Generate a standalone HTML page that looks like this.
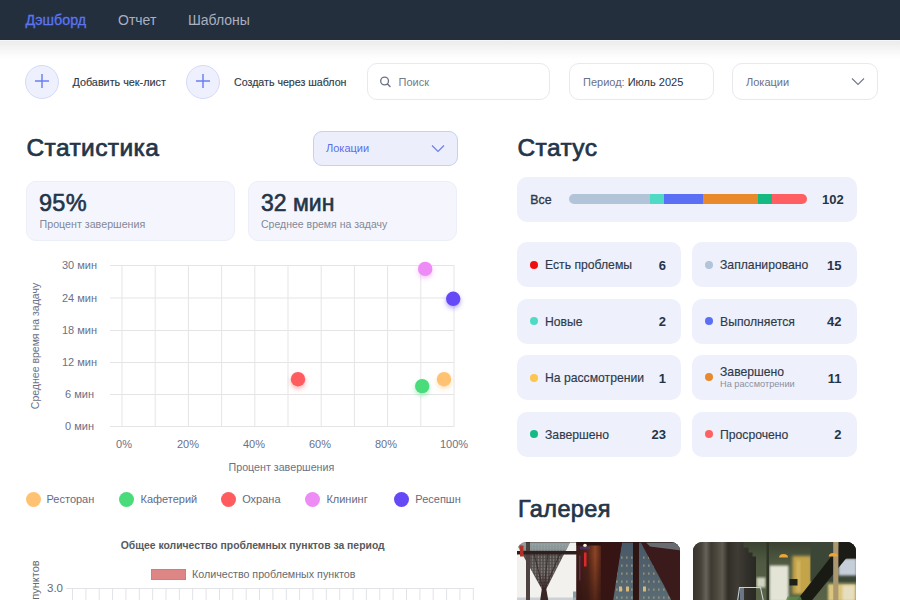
<!DOCTYPE html>
<html><head><meta charset="utf-8">
<style>
*{box-sizing:border-box;margin:0;padding:0}
html,body{width:900px;height:600px;overflow:hidden;background:#fff}
body{position:relative;font-family:"Liberation Sans",sans-serif;color:#2a3646}
.a{position:absolute;white-space:nowrap}
#hdr{left:0;top:0;width:900px;height:39.8px;background:#242f3d}
#shadow{left:0;top:40px;width:900px;height:20px;background:linear-gradient(#fafafa,#ececec 8%,#f4f4f4 40%,#fdfdfd 85%,#fff)}
.nav{top:12px;font-size:14px;line-height:16px;color:#a9afc1}
.circ{width:34px;height:34px;border-radius:50%;background:#eef0fd;border:1px solid #d5dbf8}
.plus{position:absolute;left:9.5px;top:9.5px;width:14px;height:14px}
.plus:before,.plus:after{content:"";position:absolute;background:#6a7ff2}
.plus:before{left:6.3px;top:0;width:1.35px;height:14px}
.plus:after{top:6.3px;left:0;height:1.35px;width:14px}
.btxt{font-size:10.8px;line-height:13px;color:#2f3a48;-webkit-text-stroke:0.15px #2f3a48}
.box{border:1px solid #e8e9ed;border-radius:10px;background:#fff}
.h2{font-size:24.5px;font-weight:400;color:#233549;line-height:28px;-webkit-text-stroke:0.7px #233549;letter-spacing:0.4px}
.card{background:#f5f6fd;border:1px solid #eceef8;border-radius:10px}
.scard{background:#eef0fc;border-radius:10px}
.dot{position:absolute;width:8px;height:8px;border-radius:50%;top:18.5px;left:13.4px}
.sl{position:absolute;left:28px;top:16px;font-size:12.2px;line-height:15px;color:#2d3a4a;-webkit-text-stroke:0.15px #2d3a4a}
.sn{position:absolute;right:15px;top:15.5px;font-size:13px;line-height:15px;font-weight:700;color:#233549}
.yl{font-size:11px;line-height:13px;color:#6b7187;text-align:center;width:60px}
.xl{font-size:11px;line-height:13px;color:#6b7187;width:60px;text-align:center}
.lg{font-size:11px;line-height:13px;color:#656b7f}
.ld{width:15px;height:15px;border-radius:50%}
</style></head><body>
<div class="a" id="hdr"></div>
<div class="a" id="shadow"></div>
<div class="a nav" style="left:25.6px;top:11.5px;color:#5b74f2;font-size:14.3px;-webkit-text-stroke:0.3px #5b74f2">Дэшборд</div>
<div class="a nav" style="left:118px">Отчет</div>
<div class="a nav" style="left:188px">Шаблоны</div>

<!-- toolbar -->
<div class="a circ" style="left:25px;top:64.5px"></div><svg class="a" style="left:33.75px;top:73px" width="16" height="16" viewBox="0 0 16 16"><path d="M1 8H15M8 1V15" stroke="#6a7ff2" stroke-width="1.45"/></svg>
<div class="a btxt" style="left:72.5px;top:75.8px">Добавить чек-лист</div>
<div class="a circ" style="left:186px;top:64.5px"></div><svg class="a" style="left:194.75px;top:73px" width="16" height="16" viewBox="0 0 16 16"><path d="M1 8H15M8 1V15" stroke="#6a7ff2" stroke-width="1.45"/></svg>
<div class="a btxt" style="left:234px;top:75.8px;font-size:10.65px">Создать через шаблон</div>

<div class="a box" style="left:367px;top:63px;width:183px;height:37px"></div>
<svg class="a" style="left:379px;top:75px" width="13" height="13" viewBox="0 0 13 13"><circle cx="5.6" cy="6" r="3.9" fill="none" stroke="#6b7187" stroke-width="1.35"/><path d="M8.5 9L11 11.5" stroke="#6b7187" stroke-width="1.4" stroke-linecap="round"/></svg>
<div class="a" style="left:398.5px;top:75.7px;font-size:11px;line-height:13px;color:#737a8c">Поиск</div>

<div class="a box" style="left:569px;top:63px;width:145px;height:37px"></div>
<div class="a" style="left:583px;top:75.7px;font-size:11px;line-height:13px;color:#6b7187">Период: <span style="color:#2a3646;-webkit-text-stroke:0.05px #2a3646">Июль 2025</span></div>

<div class="a box" style="left:732px;top:63px;width:146px;height:37px"></div>
<div class="a" style="left:746px;top:75.7px;font-size:11px;line-height:13px;color:#6b7187">Локации</div>
<svg class="a" style="left:851px;top:77px" width="14" height="9" viewBox="0 0 14 9"><path d="M1 1.5L7 7.5L13 1.5" fill="none" stroke="#72778c" stroke-width="1.1"/></svg>

<!-- Статистика -->
<div class="a h2" style="left:26.5px;top:134px">Статистика</div>
<div class="a" style="left:313px;top:131px;width:145px;height:35px;background:#eceefc;border:1px solid #c8cff6;border-radius:9px"></div>
<div class="a" style="left:326px;top:142px;font-size:11px;line-height:13px;color:#5b6ee8">Локации</div>
<svg class="a" style="left:431px;top:144px" width="14" height="9" viewBox="0 0 14 9"><path d="M1 1.5L7 7.5L13 1.5" fill="none" stroke="#6a7de8" stroke-width="1.15"/></svg>

<div class="a card" style="left:26px;top:181px;width:209px;height:60px"></div>
<div class="a" style="left:39px;top:189.5px;font-size:23.5px;line-height:26px;color:#233549;-webkit-text-stroke:0.6px #233549;letter-spacing:0.3px">95%</div>
<div class="a" style="left:39.5px;top:218px;font-size:10.7px;line-height:13px;color:#828898">Процент завершения</div>
<div class="a card" style="left:248px;top:181px;width:209px;height:60px"></div>
<div class="a" style="left:261px;top:189.5px;font-size:23px;line-height:26px;color:#233549;-webkit-text-stroke:0.6px #233549">32 мин</div>
<div class="a" style="left:261px;top:218px;font-size:10.5px;line-height:13px;color:#828898">Среднее время на задачу</div>

<!-- scatter chart -->
<svg class="a" style="left:0;top:250px" width="480" height="190" viewBox="0 250 480 190">
<g stroke="#e5e5e7" stroke-width="1">
<path d="M110 265.5H454M110 298H454M110 330.5H454M110 362.5H454M110 394.5H454M110 426.5H454"/>
<path d="M122 265V427M155.2 265V427M188.4 265V427M221.6 265V427M254.8 265V427M288 265V427M321.2 265V427M354.4 265V427M387.6 265V427M420.8 265V427M454 265V427"/>
</g>
</svg>
<div class="a yl" style="left:49.5px;top:259px">30 мин</div>
<div class="a yl" style="left:49.5px;top:291.5px">24 мин</div>
<div class="a yl" style="left:49.5px;top:324px">18 мин</div>
<div class="a yl" style="left:49.5px;top:356px">12 мин</div>
<div class="a yl" style="left:49.5px;top:388px">6 мин</div>
<div class="a yl" style="left:49.5px;top:420px">0 мин</div>
<div class="a" style="left:34.6px;top:346.3px;transform:translate(-50%,-50%) rotate(-90deg);font-size:10.5px;line-height:13px;color:#6b7187">Среднее время на задачу</div>
<div class="a xl" style="left:94px;top:438px">0%</div>
<div class="a xl" style="left:158px;top:438px">20%</div>
<div class="a xl" style="left:224px;top:438px">40%</div>
<div class="a xl" style="left:290px;top:438px">60%</div>
<div class="a xl" style="left:356px;top:438px">80%</div>
<div class="a xl" style="left:424px;top:438px">100%</div>
<div class="a" style="left:228.5px;top:461px;font-size:10.7px;line-height:13px;color:#6b7187">Процент завершения</div>

<svg class="a" style="left:280px;top:250px" width="190" height="160" viewBox="280 250 190 160">
<defs><filter id="gl" x="-100%" y="-100%" width="300%" height="300%"><feGaussianBlur stdDeviation="2.5"/></filter></defs>
<g filter="url(#gl)" opacity="0.5"><circle cx="425.2" cy="271.4" r="7" fill="#ee8cf6"/><circle cx="453.2" cy="301.3" r="7" fill="#6549f7"/><circle cx="298" cy="381.7" r="7" fill="#ff5c5f"/><circle cx="422.2" cy="388.6" r="7" fill="#4adb7b"/><circle cx="444" cy="381.7" r="7" fill="#ffc273"/></g>
<circle cx="425.2" cy="268.9" r="7.2" fill="#ee8cf6"/><circle cx="453.2" cy="298.8" r="7.2" fill="#6549f7"/><circle cx="298" cy="379.2" r="7.2" fill="#ff5c5f"/><circle cx="422.2" cy="386.1" r="7.2" fill="#4adb7b"/><circle cx="444" cy="379.2" r="7.2" fill="#ffc273"/>
</svg>

<!-- legend -->
<div class="a ld" style="left:25.7px;top:491.7px;background:#ffc273"></div>
<div class="a lg" style="left:46.5px;top:492.5px">Ресторан</div>
<div class="a ld" style="left:119.3px;top:491.7px;background:#4adb7b"></div>
<div class="a lg" style="left:140.5px;top:492.5px">Кафетерий</div>
<div class="a ld" style="left:221.2px;top:491.7px;background:#ff5c5f"></div>
<div class="a lg" style="left:242.2px;top:492.5px">Охрана</div>
<div class="a ld" style="left:304.5px;top:491.7px;background:#ee8cf6"></div>
<div class="a lg" style="left:326.4px;top:492.5px">Клининг</div>
<div class="a ld" style="left:394px;top:491.7px;background:#6549f7"></div>
<div class="a lg" style="left:415.3px;top:492.5px">Ресепшн</div>

<!-- bar chart -->
<div class="a" style="left:120.7px;top:539.8px;font-size:10.4px;line-height:12px;font-weight:700;color:#58595c">Общее количество проблемных пунктов за период</div>
<div class="a" style="left:151px;top:569px;width:35px;height:11px;background:#de8585;border:1px solid #d57a7a"></div>
<div class="a" style="left:192px;top:568px;font-size:10.7px;line-height:12px;color:#666a70">Количество проблемных пунктов</div>
<div class="a" style="left:47px;top:582px;font-size:11.5px;line-height:13px;color:#666a70">3.0</div>
<div class="a" style="left:34.5px;top:580px;transform:translate(-50%,-50%) rotate(-90deg);font-size:11px;line-height:13px;color:#666a70">пунктов</div>
<svg class="a" style="left:60px;top:585px" width="420" height="15" viewBox="60 585 420 15"><path d="M66 588.5H473.5M72.5 588V600M85.9 588V600M99.2 588V600M112.6 588V600M125.9 588V600M139.3 588V600M152.7 588V600M166.0 588V600M179.4 588V600M192.7 588V600M206.1 588V600M219.5 588V600M232.8 588V600M246.2 588V600M259.5 588V600M272.9 588V600M286.3 588V600M299.6 588V600M313.0 588V600M326.3 588V600M339.7 588V600M353.1 588V600M366.4 588V600M379.8 588V600M393.1 588V600M406.5 588V600M419.9 588V600M433.2 588V600M446.6 588V600M459.9 588V600M473.3 588V600" stroke="#e2e3e6" stroke-width="1" fill="none"/></svg>

<!-- Статус -->
<div class="a h2" style="left:517.5px;top:134.2px">Статус</div>
<div class="a scard" style="left:517px;top:177px;width:340px;height:45px"></div>
<div class="a" style="left:530.3px;top:193px;font-size:12.3px;line-height:15px;color:#2d3a4a;-webkit-text-stroke:0.35px #2d3a4a">Все</div>
<div class="a" style="left:569.4px;top:194.2px;width:237.6px;height:9.8px;border-radius:5px;overflow:hidden">
<div class="a" style="left:0;top:0;width:80.5px;height:10px;background:#b1c4d8"></div>
<div class="a" style="left:80.5px;top:0;width:14px;height:10px;background:#4fdac6"></div>
<div class="a" style="left:94.5px;top:0;width:39.4px;height:10px;background:#5a6ff5"></div>
<div class="a" style="left:133.9px;top:0;width:54.7px;height:10px;background:#e8892b"></div>
<div class="a" style="left:188.6px;top:0;width:14px;height:10px;background:#15ba82"></div><div class="a" style="left:202.6px;top:0;width:35px;height:10px;background:#ff5e62"></div>
</div>
<div class="a" style="left:822px;top:191.5px;font-size:13px;line-height:15px;font-weight:700;color:#233549">102</div>

<div class="a scard" style="left:517px;top:242px;width:164px;height:45px"><div class="dot" style="background:#f20d0d"></div><div class="sl">Есть проблемы</div><div class="sn">6</div></div>
<div class="a scard" style="left:692px;top:242px;width:164.5px;height:45px"><div class="dot" style="background:#b1c4d8"></div><div class="sl">Запланировано</div><div class="sn">15</div></div>
<div class="a scard" style="left:517px;top:298.5px;width:164px;height:45px"><div class="dot" style="background:#4fdac6"></div><div class="sl">Новые</div><div class="sn">2</div></div>
<div class="a scard" style="left:692px;top:298.5px;width:164.5px;height:45px"><div class="dot" style="background:#5a6ff5"></div><div class="sl">Выполняется</div><div class="sn">42</div></div>
<div class="a scard" style="left:517px;top:355px;width:164px;height:45px"><div class="dot" style="background:#fcc54e"></div><div class="sl">На рассмотрении</div><div class="sn">1</div></div>
<div class="a scard" style="left:692px;top:355px;width:164.5px;height:45px"><div class="dot" style="background:#e8892b;top:18px"></div><div class="sl" style="top:10px">Завершено</div><div class="a" style="left:28px;top:24px;font-size:9.2px;line-height:11px;color:#8a90a0">На рассмотрении</div><div class="sn">11</div></div>
<div class="a scard" style="left:517px;top:411.5px;width:164px;height:45px"><div class="dot" style="background:#15ba82"></div><div class="sl">Завершено</div><div class="sn">23</div></div>
<div class="a scard" style="left:692px;top:411.5px;width:164.5px;height:45px"><div class="dot" style="background:#ff6163"></div><div class="sl">Просрочено</div><div class="sn">2</div></div>

<!-- Галерея -->
<div class="a h2" style="left:518px;top:494.5px;font-size:23.5px">Галерея</div>
<svg class="a" style="left:517px;top:541.5px" width="163" height="59" viewBox="517 541.5 163 59">
<defs>
<clipPath id="c1"><rect x="517" y="541.5" width="163" height="80" rx="9"/></clipPath>
<filter id="b1"><feGaussianBlur stdDeviation="0.5"/></filter>
<filter id="b2"><feGaussianBlur stdDeviation="3"/></filter>
<pattern id="mesh" width="3" height="3" patternUnits="userSpaceOnUse"><circle cx="1.5" cy="1.5" r="0.8" fill="#c4cccc" opacity="0.55"/></pattern><linearGradient id="lace" x1="0" y1="0" x2="0" y2="1"><stop offset="0" stop-color="#7a8686"/><stop offset="0.25" stop-color="#4e4846"/><stop offset="0.6" stop-color="#56504e"/><stop offset="1" stop-color="#3a2a28"/></linearGradient>
<linearGradient id="fade" x1="0" y1="0" x2="0" y2="1"><stop offset="0" stop-color="#2a1210" stop-opacity="0"/><stop offset="1" stop-color="#2a1210" stop-opacity="0.6"/></linearGradient><linearGradient id="win" x1="0" y1="0" x2="0" y2="1"><stop offset="0" stop-color="#485866"/><stop offset="1" stop-color="#5a6c74"/></linearGradient>
<linearGradient id="glow" x1="0" y1="0" x2="1" y2="0"><stop offset="0" stop-color="#3a1a16"/><stop offset="0.45" stop-color="#4e2418"/><stop offset="0.75" stop-color="#8e4424"/><stop offset="1" stop-color="#4a2018"/></linearGradient>
</defs>
<g clip-path="url(#c1)">
<rect x="517" y="541" width="61" height="60" fill="#f3f1ee"/>
<rect x="573" y="591" width="3" height="10" fill="#8a9ea6"/>
<rect x="517" y="597" width="60" height="4" fill="#b4bcc4" opacity="0.6"/>
<path d="M518 546Q519 542 524 542H570L546 589H542Z" fill="url(#lace)"/><path d="M518 546Q519 542 524 542H570L546 589H542Z" fill="url(#mesh)"/>
<path d="M522 542H570L566 550H519Z" fill="#9aa8aa" opacity="0.7"/>
<g stroke="#3a2a28" stroke-width="1.2" fill="none" opacity="0.8"><path d="M534 553L543 588M548 553L544 588M560 553L545 588"/></g>
<path d="M542 587L546 587L548.5 601H540Z" fill="#3a2624"/>
<rect x="526" y="541" width="4" height="60" fill="#4e4240"/>
<rect x="517" y="550.5" width="60.5" height="3.5" fill="#2e201e"/>
<rect x="520" y="545" width="3.5" height="11" fill="#b03028" filter="url(#b1)"/>
<rect x="576.5" y="541" width="104" height="60" fill="#341818"/>
<rect x="576.5" y="541" width="25" height="60" fill="url(#glow)"/>
<rect x="576.5" y="541" width="26" height="4" fill="#2a1412"/><rect x="576.5" y="555" width="25" height="46" fill="url(#fade)"/>
<rect x="584" y="552" width="2.5" height="14" fill="#e0282e" filter="url(#b1)"/>
<rect x="579" y="555" width="1.5" height="25" fill="#7a2a6a" opacity="0.7" filter="url(#b1)"/>
<circle cx="585" cy="545" r="1.8" fill="#fff0c8" filter="url(#b1)"/>
<rect x="580" y="546" width="10" height="3" fill="#5540b0" opacity="0.5" filter="url(#b1)"/>
<path d="M622 542H633V601H612Z" fill="url(#win)"/>
<path d="M639 542H681V601H639Z" fill="url(#win)"/>
<g fill="#c8b482" opacity="0.55"><rect x="616" y="556" width="1.6" height="2.2"/><rect x="621" y="556" width="1.6" height="2.2"/><rect x="626" y="556" width="1.6" height="2.2"/><rect x="631" y="556" width="1.6" height="2.2"/><rect x="616" y="564" width="1.6" height="2.2"/><rect x="621" y="564" width="1.6" height="2.2"/><rect x="626" y="564" width="1.6" height="2.2"/><rect x="631" y="564" width="1.6" height="2.2"/><rect x="616" y="572" width="1.6" height="2.2"/><rect x="621" y="572" width="1.6" height="2.2"/><rect x="626" y="572" width="1.6" height="2.2"/><rect x="631" y="572" width="1.6" height="2.2"/><rect x="616" y="580" width="1.6" height="2.2"/><rect x="621" y="580" width="1.6" height="2.2"/><rect x="626" y="580" width="1.6" height="2.2"/><rect x="631" y="580" width="1.6" height="2.2"/><rect x="616" y="588" width="1.6" height="2.2"/><rect x="621" y="588" width="1.6" height="2.2"/><rect x="626" y="588" width="1.6" height="2.2"/><rect x="631" y="588" width="1.6" height="2.2"/><rect x="616" y="596" width="1.6" height="2.2"/><rect x="621" y="596" width="1.6" height="2.2"/><rect x="626" y="596" width="1.6" height="2.2"/><rect x="631" y="596" width="1.6" height="2.2"/><rect x="643" y="556" width="1.6" height="2.2"/><rect x="648" y="556" width="1.6" height="2.2"/><rect x="653" y="556" width="1.6" height="2.2"/><rect x="658" y="556" width="1.6" height="2.2"/><rect x="663" y="556" width="1.6" height="2.2"/><rect x="668" y="556" width="1.6" height="2.2"/><rect x="643" y="564" width="1.6" height="2.2"/><rect x="648" y="564" width="1.6" height="2.2"/><rect x="653" y="564" width="1.6" height="2.2"/><rect x="658" y="564" width="1.6" height="2.2"/><rect x="663" y="564" width="1.6" height="2.2"/><rect x="668" y="564" width="1.6" height="2.2"/><rect x="643" y="572" width="1.6" height="2.2"/><rect x="648" y="572" width="1.6" height="2.2"/><rect x="653" y="572" width="1.6" height="2.2"/><rect x="658" y="572" width="1.6" height="2.2"/><rect x="663" y="572" width="1.6" height="2.2"/><rect x="668" y="572" width="1.6" height="2.2"/><rect x="643" y="580" width="1.6" height="2.2"/><rect x="648" y="580" width="1.6" height="2.2"/><rect x="653" y="580" width="1.6" height="2.2"/><rect x="658" y="580" width="1.6" height="2.2"/><rect x="663" y="580" width="1.6" height="2.2"/><rect x="668" y="580" width="1.6" height="2.2"/><rect x="643" y="588" width="1.6" height="2.2"/><rect x="648" y="588" width="1.6" height="2.2"/><rect x="653" y="588" width="1.6" height="2.2"/><rect x="658" y="588" width="1.6" height="2.2"/><rect x="663" y="588" width="1.6" height="2.2"/><rect x="668" y="588" width="1.6" height="2.2"/><rect x="643" y="596" width="1.6" height="2.2"/><rect x="648" y="596" width="1.6" height="2.2"/><rect x="653" y="596" width="1.6" height="2.2"/><rect x="658" y="596" width="1.6" height="2.2"/><rect x="663" y="596" width="1.6" height="2.2"/><rect x="668" y="596" width="1.6" height="2.2"/></g>
<rect x="619" y="586" width="3" height="5" fill="#d6b87a"/><rect x="626" y="586" width="3" height="5" fill="#d6b87a"/><rect x="643" y="586" width="3" height="5" fill="#d6b87a"/>
<rect x="633" y="541" width="6" height="60" fill="#2e1614"/>
<path d="M641 542H681V601H672C662 580 650 560 641 542Z" fill="#3a1a1a"/>
<path d="M646 542H681V550C672 549 660 547 650 546Z" fill="#7d9096" opacity="0.7" filter="url(#b1)"/>
<path d="M601 541H622L613 601H601Z" fill="#361414"/>
<path d="M517 541H681V542.5H517Z" fill="#2a1614" opacity="0.4"/>
</g>
</svg>
<svg class="a" style="left:692.5px;top:541.5px" width="164" height="59" viewBox="692.5 541.5 164 59">
<defs>
<clipPath id="c2"><rect x="692.5" y="541.5" width="163" height="80" rx="9"/></clipPath>
<linearGradient id="cur" x1="693" y1="0" x2="756" y2="0" gradientUnits="userSpaceOnUse">
<stop offset="0" stop-color="#3a352c"/><stop offset="0.12" stop-color="#47423a"/><stop offset="0.2" stop-color="#66625a"/><stop offset="0.28" stop-color="#3e3a32"/><stop offset="0.38" stop-color="#4e4a40"/><stop offset="0.46" stop-color="#5e5a50"/><stop offset="0.55" stop-color="#302e26"/><stop offset="0.7" stop-color="#3e3c34"/><stop offset="0.85" stop-color="#32302a"/><stop offset="1" stop-color="#2a2822"/>
</linearGradient>
<linearGradient id="grn" x1="0" y1="0" x2="0" y2="1"><stop offset="0" stop-color="#3a4230"/><stop offset="0.35" stop-color="#505a42"/><stop offset="1" stop-color="#5a6448"/></linearGradient>
<filter id="b3"><feGaussianBlur stdDeviation="0.8"/></filter>
<filter id="b4"><feGaussianBlur stdDeviation="1.5"/></filter>
</defs>
<g clip-path="url(#c2)">
<rect x="692" y="541" width="165" height="60" fill="url(#grn)"/>
<rect x="769" y="565" width="19" height="36" fill="#e4e4d6" filter="url(#b3)"/>
<rect x="756" y="577" width="9" height="10" fill="#d0d4c0" filter="url(#b3)"/>
<rect x="766" y="541" width="2.5" height="60" fill="#2e3426"/>
<rect x="792" y="555.5" width="19" height="38" fill="#c4a44a" filter="url(#b4)"/>
<rect x="796" y="560" width="4" height="32" fill="#dcc070" opacity="0.6" filter="url(#b3)"/>
<rect x="789" y="578.5" width="8" height="6.5" fill="#1e2218"/>
<rect x="810" y="541" width="46" height="40" fill="#3c4636"/>
<rect x="838" y="558" width="18" height="17" fill="#c6ceda" filter="url(#b3)"/>
<rect x="827.5" y="583.5" width="28" height="17" fill="#dcc67e" filter="url(#b3)"/>
<rect x="842" y="585" width="12" height="15" fill="#e6dec0" filter="url(#b3)"/>
<path d="M795.5 601L842.5 541H857V544L810.5 601Z" fill="#1a1a14"/>
<rect x="838" y="541" width="18" height="17" fill="#1c1c16"/>
<rect x="832.7" y="541" width="5.2" height="60" fill="#ac9870"/>
<path d="M778.5 557A4.5 3.5 0 0 1 787.5 557Z" fill="#f0a438"/>
<path d="M828.2 556A4.5 3.5 0 0 1 837.2 556Z" fill="#f0a438"/>
<path d="M692 541H743V547H748V552H752V556H755.5V601H692Z" fill="url(#cur)"/>
<path d="M737 601L739 587H760L763 601" fill="none" stroke="#c8d0d8" stroke-width="1.1"/>
<rect x="739.5" y="587.5" width="4" height="13" fill="#90a4c0" opacity="0.6"/>
<path d="M785 601L787 596H800L802 601Z" fill="#5a8a4a" opacity="0.8"/>
</g>
</svg>
</body></html>
